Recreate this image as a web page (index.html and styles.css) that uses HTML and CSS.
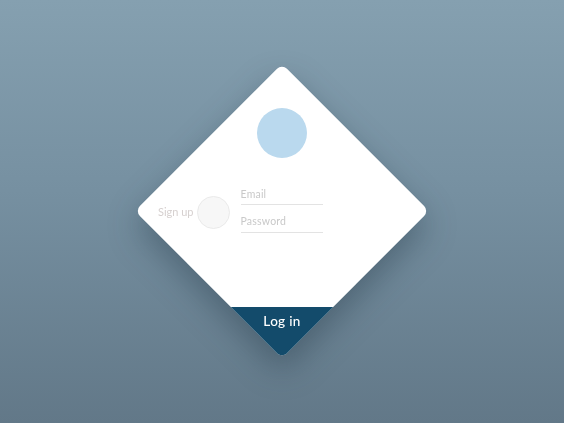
FILE: index.html
```html
<!DOCTYPE html>
<html>
<head>
<meta charset="utf-8">
<link rel="stylesheet" href="styles.css">
</head>
<body>
  <main class="stage">
    <div class="shadow-wrap">
      <div class="card">
        <div class="inner">
          <div class="avatar"></div>
          <div class="form-row">
            <span class="signup">Sign up</span>
            <span class="toggle"></span>
            <div class="fields">
              <div class="field">Email</div>
              <div class="field field-pass">Password</div>
            </div>
          </div>
          <div class="login">Log in</div>
        </div>
      </div>
    </div>
  </main>
</body>
</html>
```
FILE: styles.css
```css
html, body {
  margin: 0;
  height: 100%;
}
body {
  background: linear-gradient(180deg, #85a0b0 0%, #7690a1 45%, #627888 100%);
  font-family: Lato, "Open Sans", sans-serif;
  overflow: hidden;
}
.stage {
  height: 423px;
  display: flex;
  align-items: center;
  justify-content: center;
}
.shadow-wrap {
  margin-top: -1px;
  filter: drop-shadow(0 14px 16px rgba(20, 40, 55, 0.35));
}
.card {
  width: 208px;
  height: 208px;
  background: #fff;
  border-radius: 7px;
  overflow: hidden;
  transform: rotate(45deg);
}
.inner {
  width: 294px;
  height: 294px;
  margin: -43px 0 0 -43px;
  transform: rotate(-45deg);
  display: flex;
  flex-direction: column;
}
.avatar {
  width: 50px;
  height: 50px;
  border-radius: 50%;
  background: #bad9ee;
  margin: 44px auto 0;
}
.form-row {
  display: flex;
  align-items: flex-start;
  margin-top: 30px;
  padding-left: 23px;
}
.signup {
  font-size: 11px;
  line-height: 14px;
  color: #d6d0cf;
  margin-top: 17px;
}
.toggle {
  width: 31px;
  height: 31px;
  border-radius: 50%;
  background: #f7f7f7;
  border: 1.5px solid #e9e9e9;
  margin: 8px 0 0 3px;
}
.fields {
  width: 82px;
  margin-left: 11px;
}
.field {
  font-size: 10.5px;
  line-height: 12px;
  color: #c9c9c9;
  letter-spacing: 0.2px;
  padding-bottom: 4px;
  border-bottom: 1px solid #e3e3e3;
}
.field-pass {
  margin-top: 10px;
  padding-bottom: 5px;
}
.login {
  margin-top: auto;
  height: 51px;
  background: #134b6b;
  color: #fff;
  font-size: 13.5px;
  font-weight: 500;
  line-height: 16px;
  text-align: center;
  padding-top: 6px;
  box-sizing: border-box;
  letter-spacing: 0.3px;
}
```
